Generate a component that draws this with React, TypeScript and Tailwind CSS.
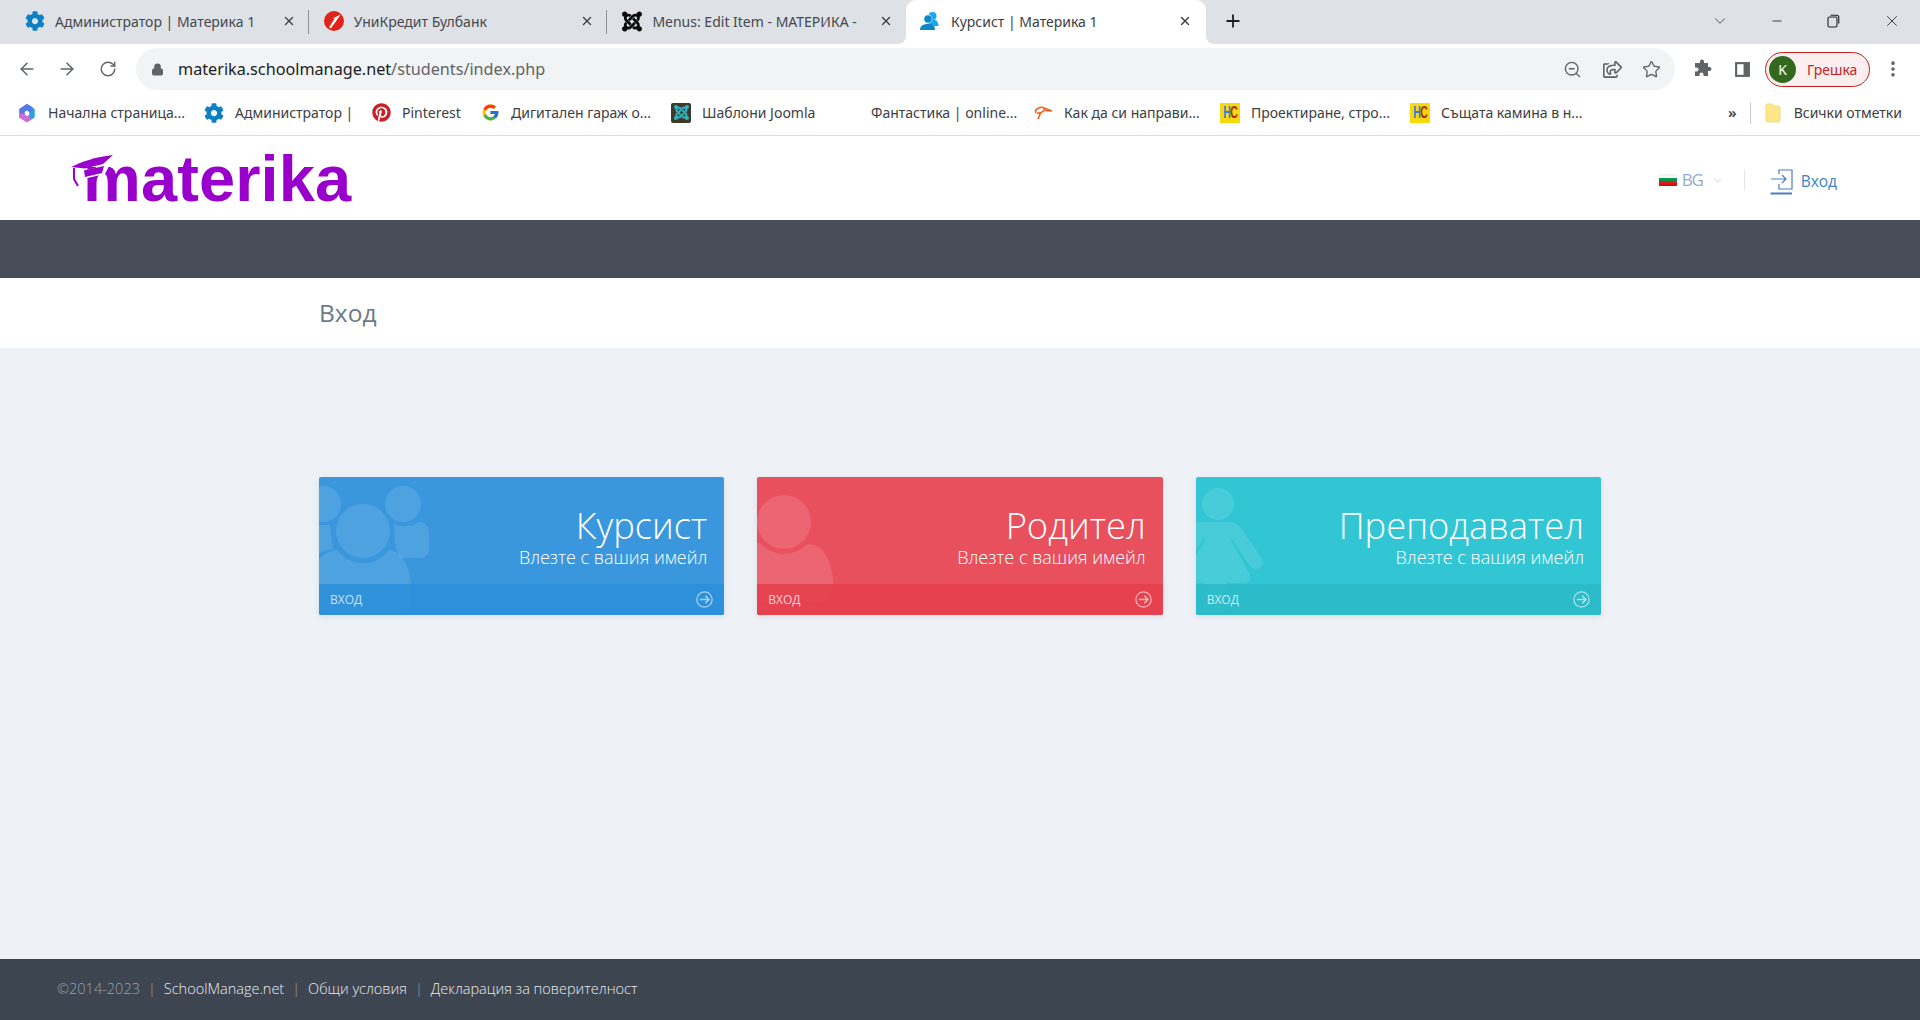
import React from "react";
import { ArrowLeft, ArrowRight, RotateCw, ZoomOut, Star, EllipsisVertical, ChevronDown, Minus, X, Plus, Lock } from "lucide-react";
import { FaCog, FaPinterest, FaRegShareSquare } from "react-icons/fa";
import { FcGoogle } from "react-icons/fc";
import { SiJoomla } from "react-icons/si";

const ui = "font-['Open_Sans','Noto_Sans',sans-serif]";

function UniCredit() {
  return (
    <svg width="20" height="20" viewBox="0 0 20 20">
      <circle cx="10" cy="10" r="10" fill="#e2231a" />
      <path d="M8.5 7.5 L16.8 3.5 L6.8 17.5 L5 16.3 L10.8 7.6Z" fill="#fff" />
    </svg>
  );
}
function UsersTab() {
  return (
    <svg width="20" height="20" viewBox="0 0 20 20">
      <circle cx="13.5" cy="5" r="4" fill="#19a8f0" />
      <path d="M9 15 C9 10 11 8.5 14 8.5 C17.5 8.5 19.5 11 19.5 15Z" fill="#19a8f0" />
      <circle cx="9" cy="8" r="4.4" fill="#fff" />
      <circle cx="9" cy="8" r="3.8" fill="#0f86c8" />
      <path d="M1 19 C1 15 4 13 9 13 C14 13 16 15 16 19Z" fill="#0f86c8" />
    </svg>
  );
}
function M365() {
  return (
    <svg width="20" height="20" viewBox="0 0 20 20" fill="none" strokeWidth="5.5" strokeLinecap="round">
      <path d="M5 13 V7.5" stroke="#8a5fdc" />
      <path d="M5 13.2 L10 16.3 L13 14.5" stroke="#c76fd6" />
      <path d="M15 13 V7.5 L12 5.5" stroke="#2f9fe0" />
      <path d="M5.2 7.2 L10 4 L13 5.8" stroke="#4f7de8" />
    </svg>
  );
}
function JoomlaBox() {
  return (
    <span className="flex h-[20px] w-[20px] items-center justify-center rounded-[2px] bg-[#3f3a28] text-[#27b4c8]">
      <SiJoomla size={15} />
    </span>
  );
}
function Swirl() {
  return (
    <svg width="20" height="18" viewBox="0 0 20 18" fill="none" stroke="#f0601e" strokeWidth="1.7">
      <path d="M3 9 C1 5 8 2 11 4 C13 6 8 10 4 9 M11 4 L19 7 L12 6.5 M8 8 L5 15" />
    </svg>
  );
}
function HC() {
  return (
    <span className="flex h-[20px] w-[20px] items-center justify-center overflow-hidden bg-[#f5d90a] font-['Liberation_Sans',sans-serif] text-[17px] font-bold leading-none">
      <span className="flex scale-x-[0.62] tracking-[-1px]">
        <span className="text-[#2f7fd0]">H</span>
        <span className="text-[#b3261e]">C</span>
      </span>
    </span>
  );
}
function Gear() {
  return <FaCog size={20} color="#0b80c4" />;
}

const tabs = [
  { icon: <Gear />, text: "Администратор | Материка 1", sep: true },
  { icon: <UniCredit />, text: "УниКредит Булбанк", sep: true },
  { icon: <SiJoomla size={21} color="#0a0a0a" />, text: "Menus: Edit Item - МАТЕРИКА -", sep: false },
];

const bookmarks = [
  { icon: <M365 />, text: "Начална страница...", w: "w-[187px]" },
  { icon: <Gear />, text: "Администратор |", w: "w-[167px]" },
  { icon: <FaPinterest size={19} color="#cb2027" />, text: "Pinterest", w: "w-[109px]" },
  { icon: <FcGoogle size={19} />, text: "Дигитален гараж о...", w: "w-[191px]" },
  { icon: <JoomlaBox />, text: "Шаблони Joomla", w: "w-[169px]" },
  { icon: <span className="block h-[20px] w-[20px]" />, text: "Фантастика | online...", w: "w-[193px]" },
  { icon: <Swirl />, text: "Как да си направи...", w: "w-[187px]" },
  { icon: <HC />, text: "Проектиране, стро...", w: "w-[190px]" },
  { icon: <HC />, text: "Същата камина в н...", w: "w-[190px]" },
];

function ArrowCircle() {
  return (
    <svg width="17" height="17" viewBox="0 0 16 16" fill="none" stroke="#fff" strokeOpacity="0.6" strokeWidth="1.2">
      <circle cx="8" cy="8" r="7.2" />
      <path d="M3.6 8 H12.2 M8.8 4.6 L12.2 8 L8.8 11.4" strokeWidth="1.4" />
    </svg>
  );
}

function UsersMark() {
  return (
    <svg className="absolute left-0 top-0" width="405" height="138" viewBox="0 0 405 138" fill="#fff" fillOpacity="0.11">
      <circle cx="44" cy="54" r="27" />
      <circle cx="84" cy="27" r="18" />
      <circle cx="4" cy="27" r="18" />
      <path d="M-5 133 V95 C-5 82 8 74 18 73 A32 32 0 0 0 70 73 C82 74 92 88 92 112 V120 C92 130 85 133 78 133Z" />
      <path d="M74 46 A22 22 0 0 0 98 46 C106 43 110 50 110 58 V72 C110 78 106 81 100 81 H81 C78 72 74 66 76 54 C76 51 75 48 74 46Z" />
      <path d="M-5 48 H11 C12 54 12 62 14 72 C8 73 2 75 -5 78Z" />
    </svg>
  );
}
function ParentMark() {
  return (
    <svg className="absolute left-0 top-0" width="405" height="138" viewBox="0 0 405 138" fill="#fff" fillOpacity="0.13">
      <circle cx="27" cy="45" r="27" />
      <path d="M-5 66 H3 A32 32 0 0 0 49 68 C65 64 76 85 76 105 C76 118 70 125 60 125 H-5Z" />
    </svg>
  );
}
function TeacherMark() {
  return (
    <svg className="absolute left-0 top-0" width="405" height="138" viewBox="0 0 405 138" fill="#fff" fillOpacity="0.11">
      <circle cx="22" cy="27" r="16" />
      <path d="M-5 45 H32 C38 45 42 47 45 51 L66 82 C70 90 60 96 54 89 L36 62 L35 63 L53 96 C57 103 52 106 46 106 H30 V134 H8 V106 H-5 V85 L9 64 V60 L-5 80Z" />
    </svg>
  );
}

const cards = [
  { title: "Курсист", bg: "bg-[#3a97dd]", strip: "bg-[#2a8fd9]/85", mark: <UsersMark /> },
  { title: "Родител", bg: "bg-[#e8505d]", strip: "bg-[#e53e4b]/85", mark: <ParentMark /> },
  { title: "Преподавател", bg: "bg-[#32c6d5]", strip: "bg-[#2cb8c6]/85", mark: <TeacherMark /> },
];

function Card({ title, bg, strip, mark }: { title: string; bg: string; strip: string; mark: React.ReactNode }) {
  return (
    <div className={`relative h-[138px] overflow-hidden rounded-[2px] text-white shadow-[0_2px_6px_rgba(60,80,110,0.1)] ${bg}`}>
      {mark}
      <div className="relative flex h-[107px] flex-col items-end pr-[17px] pt-[26px]">
        <div className="text-[36.3px] font-light leading-[44px]">{title}</div>
        <div className="text-[18px] font-light leading-[20px]">Влезте с вашия имейл</div>
      </div>
      <div className={`relative flex h-[31px] items-center justify-between pl-[11px] pr-[11px] ${strip}`}>
        <span className="text-[12px] text-white/75">ВХОД</span>
        <ArrowCircle />
      </div>
    </div>
  );
}

export default function App() {
  return (
    <div className={`flex h-[1020px] min-h-screen flex-col overflow-hidden bg-[#eef1f6] ${ui}`}>
      {/* tab strip */}
      <div className="flex h-[44px] shrink-0 items-stretch bg-[#dee1e6] pl-[10px] font-['Noto_Sans',sans-serif] text-[#45494e]">
        {tabs.map((t) => (
          <div key={t.text} className="relative flex w-[298.7px] shrink-0 items-center pb-[2px] pl-[15px] pr-[12px]">
            <span className="flex w-[20px] shrink-0 justify-center">{t.icon}</span>
            <span className="ml-[10px] max-w-[214px] overflow-hidden whitespace-nowrap text-[14px]">{t.text}</span>
            <X size={14} strokeWidth={2.4} className="ml-auto mr-[1px] shrink-0 text-[#3c4043]" />
            {t.sep && <span className="absolute right-0 top-[10px] h-[24px] w-px bg-[#8f9399]" />}
          </div>
        ))}
        <div className="relative flex w-[300px] shrink-0 items-center rounded-t-[10px] bg-white pb-[2px] pl-[13px] pr-[12px] text-[#3c4043]">
          <span className="absolute bottom-0 left-[-8px] h-[8px] w-[8px] bg-white">
            <span className="block h-full w-full rounded-br-[8px] bg-[#dee1e6]" />
          </span>
          <span className="absolute bottom-0 right-[-8px] h-[8px] w-[8px] bg-white">
            <span className="block h-full w-full rounded-bl-[8px] bg-[#dee1e6]" />
          </span>
          <span className="flex w-[20px] shrink-0 justify-center"><UsersTab /></span>
          <span className="ml-[12px] whitespace-nowrap text-[14px]">Курсист | Материка 1</span>
          <X size={14} strokeWidth={2.4} className="ml-auto mr-[2px] shrink-0" />
        </div>
        <div className="ml-[17px] flex items-center pb-[2px] text-[#202124]">
          <Plus size={20} strokeWidth={2.2} />
        </div>
        <div className="ml-auto flex items-center pb-[2px] text-[#202124]">
          <ChevronDown size={18} strokeWidth={1} className="mr-[41px]" />
          <Minus size={14} strokeWidth={1.4} className="mr-[42px]" />
          <svg width="14" height="14" viewBox="0 0 14 14" fill="none" stroke="currentColor" strokeWidth="1.1" className="mr-[43px]">
            <rect x="2" y="3" width="9" height="10" rx="1.5" />
            <path d="M4.5 1.2 H10.5 C12 1.2 12.8 2 12.8 3.5 V9.5" />
          </svg>
          <X size={18} strokeWidth={1.1} className="mr-[19px]" />
        </div>
      </div>

      {/* toolbar */}
      <div className="flex h-[48px] shrink-0 items-center bg-white pt-[2px] font-['Noto_Sans',sans-serif] text-[#5f6368]">
        <ArrowLeft size={20} strokeWidth={1.8} className="ml-[17px]" />
        <ArrowRight size={20} strokeWidth={1.8} className="ml-[20px]" />
        <RotateCw size={18} strokeWidth={1.8} className="ml-[22px]" />
        <div className="ml-[19px] flex h-[42px] w-[1539px] items-center rounded-full bg-[#f1f3f4] pl-[15px] pr-[14px]">
          <Lock size={13} fill="currentColor" strokeWidth={2} />
          <span className="ml-[14px] text-[16.2px] text-[#202124]">
            materika.schoolmanage.net<span className="text-[#5f6368]">/students/index.php</span>
          </span>
          <ZoomOut size={19} strokeWidth={1.7} className="ml-auto mr-[21px]" />
          <FaRegShareSquare size={19} className="mr-[20px]" />
          <Star size={19} strokeWidth={1.7} />
        </div>
        <svg width="20" height="20" viewBox="0 0 20 20" fill="currentColor" className="ml-[17px]">
          <path d="M8 2.5a2 2 0 0 1 4 0V4h4v4h1.5a2 2 0 0 1 0 4H16v5h-4.5v-1.5a2 2 0 0 0-4 0V17H3v-4.5h1.5a2 2 0 0 0 0-4H3V4h5z" />
        </svg>
        <svg width="17" height="17" viewBox="0 0 16 16" className="ml-[22px]">
          <rect x="1" y="1" width="14" height="14" fill="#5f6368" />
          <rect x="3" y="3" width="6" height="10" fill="#fff" />
        </svg>
        <div className="ml-[14px] flex h-[35px] w-[105px] items-center rounded-full border border-[#c5221f] bg-[#fbeeee] pl-[3px]">
          <span className="flex h-[27px] w-[27px] items-center justify-center rounded-full bg-[#33691e] text-[14px] text-white">K</span>
          <span className="ml-[11px] text-[14px] text-[#c5221f]">Грешка</span>
        </div>
        <EllipsisVertical size={20} strokeWidth={2.4} className="ml-[13px]" />
      </div>

      {/* bookmarks */}
      <div className="flex h-[44px] shrink-0 items-center border-b border-[#dcdcdc] bg-white pb-[2px] pl-[17px] font-['Noto_Sans',sans-serif] text-[14px] text-[#3c4043]">
        {bookmarks.map((b, i) => (
          <div key={i} className={`flex shrink-0 items-center gap-[11px] whitespace-nowrap ${b.w}`}>
            <span className="flex w-[20px] shrink-0 justify-center">{b.icon}</span>
            <span>{b.text}</span>
          </div>
        ))}
        <span className="ml-auto text-[15px] font-semibold">»</span>
        <span className="ml-[13px] h-[22px] w-px bg-[#c8cacd]" />
        <svg width="16" height="20" viewBox="0 0 16 20" className="ml-[14px]">
          <path d="M1 3 Q1 1 3 1 H7 L9 3 H13 Q15 3 15 5 V17 Q15 19 13 19 H3 Q1 19 1 17Z" fill="#fde68a" stroke="#f5d77a" />
        </svg>
        <span className="ml-[13px] mr-[18px]">Всички отметки</span>
      </div>

      {/* site header */}
      <div className="flex h-[84px] shrink-0 items-center bg-white">
        <div className="relative ml-[71px] flex h-[84px] items-center">
          <span className="pl-[12px] font-['Liberation_Sans',sans-serif] text-[65px] font-bold leading-none tracking-[0.1px] text-[#9900cc]">materika</span>
          <svg className="absolute left-0 top-[18px]" width="46" height="36" viewBox="0 0 46 36">
            <path d="M10 17 L36 12 L42 4 L34 20 L12 25Z" fill="#fff" />
            <path d="M0 13 C10 8 24 3 42 1 L32 10 L14 14.5 Z" fill="#9900cc" />
            <path d="M13 16.5 L33 12 L31 19 L14 23Z" fill="#9900cc" />
            <path d="M3 14 V25 L7 32" stroke="#9900cc" strokeWidth="2" fill="none" />
          </svg>
        </div>
        <div className="ml-auto flex items-center pr-[83px] pt-[4px]">
          <svg width="18" height="12" viewBox="0 0 18 12" className="shrink-0">
            <defs>
              <linearGradient id="fl" x1="0" x2="0" y1="0" y2="1">
                <stop offset="0" stopColor="#eeeeee" />
                <stop offset="0.33" stopColor="#ffffff" />
                <stop offset="0.34" stopColor="#00a651" />
                <stop offset="0.66" stopColor="#1c7a38" />
                <stop offset="0.67" stopColor="#e0201c" />
                <stop offset="1" stopColor="#c01010" />
              </linearGradient>
            </defs>
            <rect width="18" height="12" fill="url(#fl)" />
          </svg>
          <span className="ml-[5px] text-[17px] tracking-[-1.2px] text-[#93acca]">BG</span>
          <ChevronDown size={13} strokeWidth={1.6} className="ml-[8px] text-[#c3d0df]" />
          <span className="ml-[20px] h-[20px] w-px bg-[#dfe5ec]" />
          <svg width="24" height="26" viewBox="0 0 24 26" fill="none" stroke="#4a7cc4" strokeWidth="1.2" className="ml-[25px] mt-[3px]">
            <path d="M9 5 V1 H22 V20 H9 V15" />
            <path d="M1 10 H16 M12 6 L16 10 L12 14" />
            <path d="M0.5 24.5 H22" strokeWidth="2" />
          </svg>
          <span className="ml-[7px] mt-[3px] text-[15.5px] text-[#3a86c8]">Вход</span>
        </div>
      </div>

      {/* dark bar */}
      <div className="h-[58px] shrink-0 bg-[#474e5a]" />

      {/* title */}
      <div className="flex h-[70px] shrink-0 items-center bg-white">
        <div className="mx-auto w-[1282px] text-[24.5px] font-normal text-[#6b7b86]">Вход</div>
      </div>

      {/* main */}
      <div className="flex-1 pt-[129px]">
        <div className="mx-auto grid w-[1282px] grid-cols-3 gap-[33px]">
          {cards.map((c) => (
            <Card key={c.title} {...c} />
          ))}
        </div>
      </div>

      {/* footer */}
      <div className="flex h-[61px] shrink-0 items-center bg-[#3d4550] pb-[2px] pl-[57px] text-[14.5px] font-light text-[#e8ebee]">
        <span className="text-[#99a2ac]">©2014-2023</span>
        <span className="mx-[8px] text-[#99a2ac]">|</span>
        <span>SchoolManage.net</span>
        <span className="mx-[8px] text-[#99a2ac]">|</span>
        <span>Общи условия</span>
        <span className="mx-[8px] text-[#99a2ac]">|</span>
        <span>Декларация за поверителност</span>
      </div>
    </div>
  );
}
